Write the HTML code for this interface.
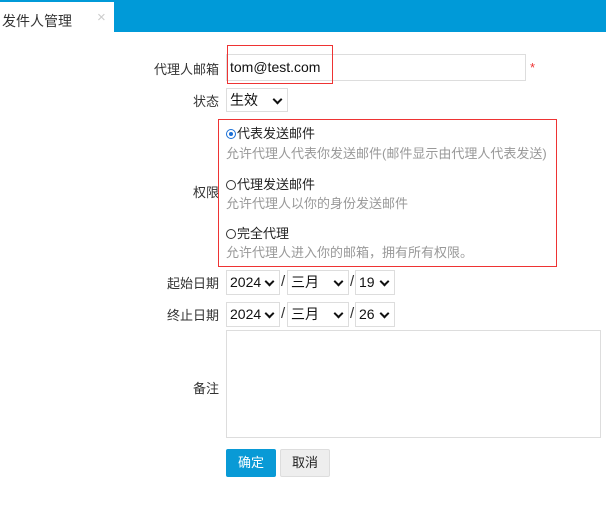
<!DOCTYPE html><html><head><meta charset="utf-8"><style>
body{margin:0;width:606px;height:509px;background:#fff;position:relative;overflow:hidden;font-family:"Liberation Sans","Noto Sans CJK SC",sans-serif;font-size:13px;color:#333}
.a{position:absolute}
.lbl{position:absolute;right:387px;text-align:right;white-space:nowrap}
.sel{position:absolute;border:1px solid #ddd;height:22px;box-sizing:border-box;background:#fff;font-size:14px;color:#111;line-height:22px;padding-left:3px}
.sel:after{content:"";position:absolute;right:6px;top:7px;width:5px;height:5px;border-right:2px solid #111;border-bottom:2px solid #111;transform:rotate(45deg)}
.sl{position:absolute;font-size:15px;color:#333}
.g{color:#999}
.r{display:inline-block;width:10px;height:10px;border:1px solid #333;border-radius:50%;vertical-align:-1px;margin-right:1px;box-sizing:border-box;position:relative}
.r.on:after{content:"";position:absolute;left:2px;top:2px;width:4px;height:4px;border-radius:50%;background:#1a6fd6}
.r.on{border-color:#1a6fd6}
</style></head><body>
<div class="a" style="left:0;top:0;width:606px;height:32px;background:#009ad8"></div>
<div class="a" style="left:0;top:2px;width:114px;height:30px;background:#fff"></div>
<div class="a" style="left:2px;top:11px;font-size:14px;color:#333">发件人管理</div>
<div class="a" style="left:97px;top:9px;font-size:15px;color:#ccc">×</div>

<div class="lbl" style="top:59px">代理人邮箱</div>
<div class="a" style="left:226px;top:54px;width:300px;height:27px;box-sizing:border-box;border:1px solid #ddd"></div>
<div class="a" style="left:227px;top:45px;width:106px;height:39px;box-sizing:border-box;border:1px solid #e33"></div>
<div class="a" style="left:230px;top:59px;font-size:14px;color:#111">tom@test.com</div>
<div class="a" style="left:530px;top:60px;color:#e33">*</div>

<div class="lbl" style="top:91px">状态</div>
<div class="sel" style="left:226px;top:88px;width:62px;height:24px">生效</div>

<div class="lbl" style="top:182px">权限</div>
<div class="a" style="left:218px;top:119px;width:339px;height:148px;box-sizing:border-box;border:1px solid #e33;background:#fff"></div>
<div class="a" style="left:226px;top:123px;color:#222"><span class="r on"></span>代表发送邮件</div>
<div class="a g" style="left:226px;top:143px">允许代理人代表你发送邮件(邮件显示由代理人代表发送)</div>
<div class="a" style="left:226px;top:174px;color:#222"><span class="r"></span>代理发送邮件</div>
<div class="a g" style="left:226px;top:193px">允许代理人以你的身份发送邮件</div>
<div class="a" style="left:226px;top:223px;color:#222"><span class="r"></span>完全代理</div>
<div class="a g" style="left:226px;top:242px">允许代理人进入你的邮箱，拥有所有权限。</div>

<div class="lbl" style="top:273px">起始日期</div>
<div class="sel" style="left:226px;top:270px;width:54px;height:25px">2024</div>
<div class="sl" style="left:281px;top:273px">/</div>
<div class="sel" style="left:287px;top:270px;width:62px;height:25px">三月</div>
<div class="sl" style="left:350px;top:273px">/</div>
<div class="sel" style="left:355px;top:270px;width:40px;height:25px">19</div>

<div class="lbl" style="top:305px">终止日期</div>
<div class="sel" style="left:226px;top:302px;width:54px;height:25px">2024</div>
<div class="sl" style="left:281px;top:305px">/</div>
<div class="sel" style="left:287px;top:302px;width:62px;height:25px">三月</div>
<div class="sl" style="left:350px;top:305px">/</div>
<div class="sel" style="left:355px;top:302px;width:40px;height:25px">26</div>

<div class="lbl" style="top:378px">备注</div>
<div class="a" style="left:226px;top:330px;width:375px;height:108px;box-sizing:border-box;border:1px solid #ddd"></div>

<div class="a" style="left:226px;top:449px;width:50px;height:28px;background:#099ad6;border-radius:2px;color:#fff;text-align:center;line-height:28px">确定</div>
<div class="a" style="left:280px;top:449px;width:50px;height:28px;box-sizing:border-box;background:#eee;border:1px solid #ddd;border-radius:2px;color:#222;text-align:center;line-height:26px">取消</div>
</body></html>
